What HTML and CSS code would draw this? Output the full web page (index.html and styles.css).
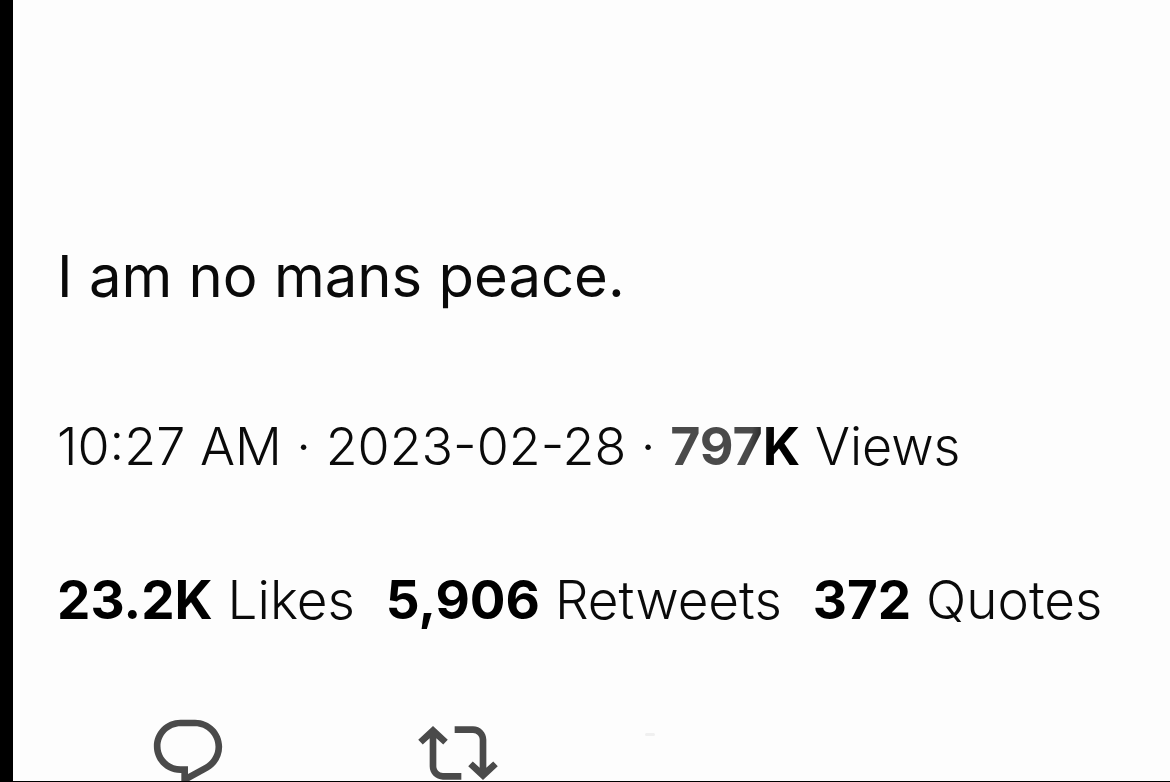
FILE: index.html
```html
<!DOCTYPE html>
<html lang="en">
<head>
  <meta charset="UTF-8">
  <meta name="viewport" content="width=device-width, initial-scale=1.0">
  <title>Post</title>
  <link rel="stylesheet" href="styles.css">
</head>
<body>
  <article class="post">
    <p class="post-text">I am no mans peace.</p>

    <p class="meta">
      <time datetime="2023-02-28T10:27">10:27 AM · 2023-02-28</time> · <b class="views">797K</b> Views
    </p>

    <ul class="stats">
      <li><b>23.2K</b> Likes</li>
      <li><b>5,906</b> Retweets</li>
      <li><b>372</b> Quotes</li>
    </ul>

    <div class="actions">
      <button type="button" class="reply" aria-label="Reply">
        <svg viewBox="0 0 24 24"><path d="M1.751 10c0-4.42 3.584-8 8.005-8h4.366c4.49 0 8.129 3.64 8.129 8.13 0 2.96-1.607 5.68-4.196 7.11l-8.054 4.46v-3.69h-.067c-4.49.1-8.183-3.51-8.183-8.01zm8.005-6c-3.317 0-6.005 2.69-6.005 6 0 3.37 2.77 6.08 6.138 6.01l.351-.01h1.761v2.3l5.087-2.81c1.951-1.08 3.163-3.13 3.163-5.36 0-3.39-2.744-6.13-6.129-6.13H9.756z"/></svg>
      </button>
      <button type="button" class="retweet" aria-label="Retweet">
        <svg viewBox="0 0 24 24"><path d="M4.5 3.88l4.432 4.14-1.364 1.46L5.5 7.55V16c0 1.1.896 2 2 2H13v2H7.5c-2.209 0-4-1.79-4-4V7.55L1.432 9.48.068 8.02 4.5 3.88zM16.5 6H11V4h5.5c2.209 0 4 1.79 4 4v8.45l2.068-1.93 1.364 1.46-4.432 4.14-4.432-4.14 1.364-1.46 2.068 1.93V8c0-1.1-.896-2-2-2z"/></svg>
      </button>
    </div>
  </article>
</body>
</html>
```

FILE: styles.css
```css
* {
  margin: 0;
  padding: 0;
  box-sizing: border-box;
}

body {
  background: #fdfdfd;
  color: #0a0a0a;
  font-family: Inter, "Liberation Sans", sans-serif;
}

.post {
  height: 100vh;
  padding: 240px 44px 0;
  border-left: 13px solid #000;
  border-bottom: 1px solid #000;
  overflow: hidden;
}

.post-text {
  font-size: 58px;
  line-height: 72px;
}

.meta,
.stats {
  line-height: 66px;
  font-weight: 300;
  white-space: nowrap;
}

.meta {
  margin-top: 102px;
  font-size: 52px;
}

.meta b,
.stats b {
  font-weight: 700;
  color: #000;
}

/* grey fading to black under the K */
.meta .views {
  background: linear-gradient(100deg, #4a4a4a 60%, #000 75%);
  -webkit-background-clip: text;
  background-clip: text;
  color: transparent;
}

.stats {
  display: flex;
  gap: 31px;
  margin-top: 87px;
  font-size: 53px;
  list-style: none;
}

.actions {
  display: flex;
  margin-top: 80px;
  padding-left: 91px;
}

.actions button {
  width: 80px;
  height: 80px;
  border: 0;
  background: none;
  color: #4a4a4a;
  cursor: pointer;
}

.actions .reply {
  margin-right: 190px;
}

.actions svg {
  display: block;
  width: 80px;
  height: 80px;
  fill: currentColor;
}

/* faint mark after the buttons */
.actions::after {
  content: '';
  width: 10px;
  height: 3px;
  margin: 20px 0 0 147px;
  border-radius: 2px;
  background: #f0f0f0;
}
```
